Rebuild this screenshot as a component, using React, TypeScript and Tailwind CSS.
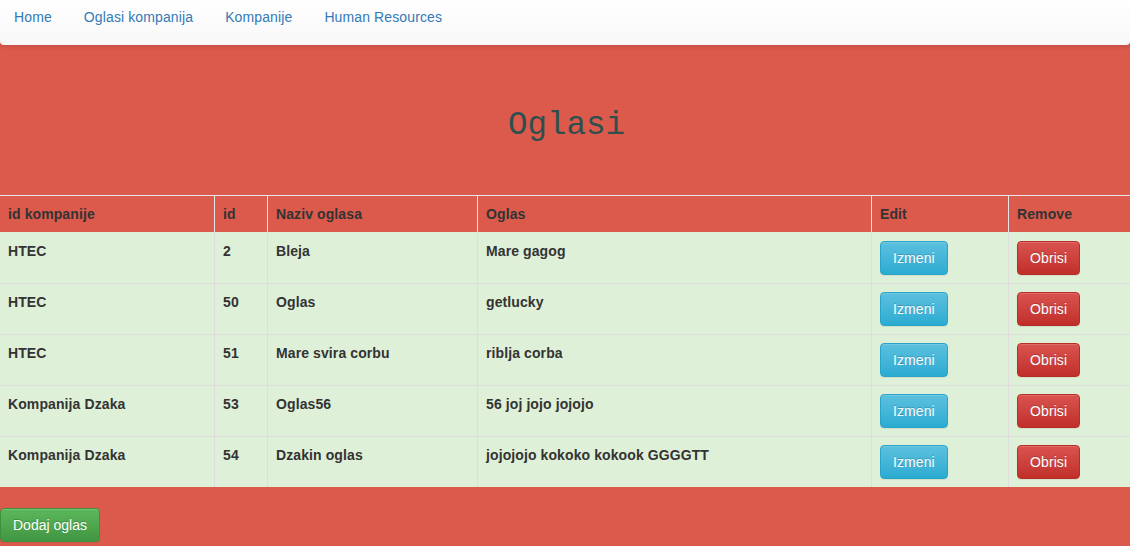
import React from "react";

const rows = [
  { k: "HTEC", id: "2", naziv: "Bleja", oglas: "Mare gagog" },
  { k: "HTEC", id: "50", naziv: "Oglas", oglas: "getlucky" },
  { k: "HTEC", id: "51", naziv: "Mare svira corbu", oglas: "riblja corba" },
  { k: "Kompanija Dzaka", id: "53", naziv: "Oglas56", oglas: "56 joj jojo jojojo" },
  { k: "Kompanija Dzaka", id: "54", naziv: "Dzakin oglas", oglas: "jojojojo kokoko kokook GGGGTT" },
];

const grid = "grid grid-cols-[214px_53px_210px_394px_137px_1fr]";

export default function App() {
  return (
    <div
      className="w-[1130px] h-[546px] overflow-hidden bg-[#dc5a4b] text-[14px] text-[#333]"
      style={{ fontFamily: '"Liberation Sans", Arial, sans-serif' }}
    >
      <nav className="relative z-10 h-[45px] bg-gradient-to-b from-white to-[#f8f8f8] rounded-b-[4px] shadow-[0_1px_5px_rgba(0,0,0,0.15)] flex items-start pl-[14px] pt-[7px] gap-8 leading-[20px] tracking-[0.12px] text-[#337ab7]">
        <span>Home</span>
        <span>Oglasi kompanija</span>
        <span>Kompanije</span>
        <span>Human Resources</span>
      </nav>
      <div className="h-[150px] pt-[61px] pl-[3px] text-center">
        <h1
          className="text-[32.5px] leading-[40px] text-[#2f4f4f] font-normal"
          style={{ fontFamily: '"Liberation Mono", "DejaVu Sans Mono", monospace' }}
        >
          Oglasi
        </h1>
      </div>
      <div className="font-bold leading-[20px] tracking-[0.1px]">
        <div className={`${grid} border-t border-[#e6e6e6]`}>
          {["id kompanije", "id", "Naziv oglasa", "Oglas", "Edit", "Remove"].map((h, i) => (
            <div key={h} className={`p-2 h-[36px] ${i > 0 ? "border-l border-[#e6e6e6]" : ""}`}>
              {h}
            </div>
          ))}
        </div>
        {rows.map((r, idx) => (
          <div
            key={idx}
            className={`${grid} bg-[#dff0d8] border-t ${idx === 0 ? "border-[#dff0d8]" : "border-[#ddd]"}`}
          >
            <div className="p-2">{r.k}</div>
            <div className="p-2 border-l border-[#ddd]">{r.id}</div>
            <div className="p-2 border-l border-[#ddd]">{r.naziv}</div>
            <div className="p-2 border-l border-[#ddd]">{r.oglas}</div>
            <div className="p-2 border-l border-[#ddd]">
              <button className="h-[34px] px-3 rounded-[4px] border border-[#28a4c9] bg-gradient-to-b from-[#5bc0de] to-[#2aabd2] text-white font-normal leading-[20px] [text-shadow:0_-1px_0_rgba(0,0,0,0.2)] shadow-[inset_0_1px_0_rgba(255,255,255,0.15),0_1px_1px_rgba(0,0,0,0.075)]">
                Izmeni
              </button>
            </div>
            <div className="p-2 border-l border-[#ddd]">
              <button className="h-[34px] px-3 rounded-[4px] border border-[#b92c28] bg-gradient-to-b from-[#d9534f] to-[#c12e2a] text-white font-normal leading-[20px] [text-shadow:0_-1px_0_rgba(0,0,0,0.2)] shadow-[inset_0_1px_0_rgba(255,255,255,0.15),0_1px_1px_rgba(0,0,0,0.075)]">
                Obrisi
              </button>
            </div>
          </div>
        ))}
      </div>
      <div className="pt-[21px]">
        <button className="h-[34px] px-3 rounded-[4px] border border-[#3e8f3e] bg-gradient-to-b from-[#5cb85c] to-[#419641] text-white leading-[20px] [text-shadow:0_-1px_0_rgba(0,0,0,0.2)] shadow-[inset_0_1px_0_rgba(255,255,255,0.15),0_1px_1px_rgba(0,0,0,0.075)]">
          Dodaj oglas
        </button>
      </div>
    </div>
  );
}
